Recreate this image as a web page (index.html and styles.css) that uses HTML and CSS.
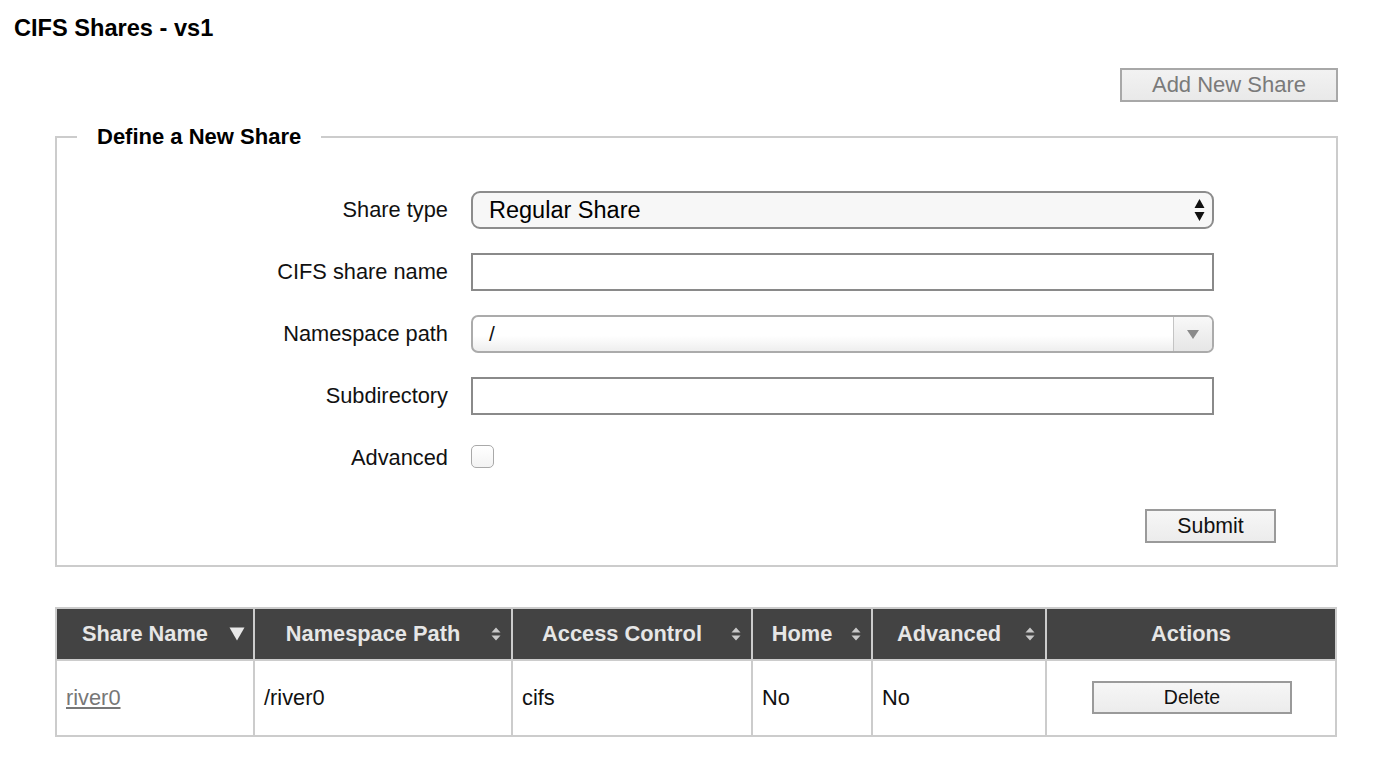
FILE: index.html
```html
<!DOCTYPE html>
<html>
<head>
<meta charset="utf-8">
<title>CIFS Shares - vs1</title>
<link rel="stylesheet" href="styles.css">
</head>
<body>
<div class="page">
  <h1 class="title">CIFS Shares - vs1</h1>
  <div class="toolbar">
    <button class="btn btn-add" type="button">Add New Share</button>
  </div>
  <fieldset class="share-form">
    <legend>Define a New Share</legend>
    <div class="rows">
      <div class="row">
        <label class="lbl">Share type</label>
        <div class="select">
          <span class="select-text">Regular Share</span>
          <svg class="select-arrows" width="11" height="24" viewBox="0 0 11 24"><path d="M5.5 1 L10.5 10 L0.5 10 Z M0.5 14 L10.5 14 L5.5 23 Z" fill="#111"/></svg>
        </div>
      </div>
      <div class="row">
        <label class="lbl">CIFS share name</label>
        <div class="text-input"></div>
      </div>
      <div class="row">
        <label class="lbl">Namespace path</label>
        <div class="combo">
          <span class="combo-text">/</span>
          <span class="combo-btn"><svg width="12" height="9" viewBox="0 0 12 9"><path d="M0 0 L12 0 L6 9 Z" fill="#8a8a8a"/></svg></span>
        </div>
      </div>
      <div class="row">
        <label class="lbl">Subdirectory</label>
        <div class="text-input"></div>
      </div>
      <div class="row">
        <label class="lbl">Advanced</label>
        <span class="checkbox"></span>
      </div>
    </div>
    <div class="submit-row">
      <button class="btn btn-submit" type="button">Submit</button>
    </div>
  </fieldset>

  <table class="grid">
    <colgroup>
      <col style="width:198px">
      <col style="width:258px">
      <col style="width:240px">
      <col style="width:120px">
      <col style="width:174px">
      <col style="width:290px">
    </colgroup>
    <thead>
      <tr>
        <th class="sortable">Share Name<svg class="sort-down" width="16" height="14" viewBox="0 0 16 14"><path d="M0.5 0.5 L15.5 0.5 L8 13.5 Z" fill="#e8e8e8"/></svg></th>
        <th class="sortable">Namespace Path<svg class="sort-both" width="10" height="14" viewBox="0 0 10 14"><path d="M5 0.5 L9.5 5.5 L0.5 5.5 Z M0.5 8.5 L9.5 8.5 L5 13.5 Z" fill="#c8c8c8"/></svg></th>
        <th class="sortable">Access Control<svg class="sort-both" width="10" height="14" viewBox="0 0 10 14"><path d="M5 0.5 L9.5 5.5 L0.5 5.5 Z M0.5 8.5 L9.5 8.5 L5 13.5 Z" fill="#c8c8c8"/></svg></th>
        <th class="sortable">Home<svg class="sort-both" width="10" height="14" viewBox="0 0 10 14"><path d="M5 0.5 L9.5 5.5 L0.5 5.5 Z M0.5 8.5 L9.5 8.5 L5 13.5 Z" fill="#c8c8c8"/></svg></th>
        <th class="sortable">Advanced<svg class="sort-both" width="10" height="14" viewBox="0 0 10 14"><path d="M5 0.5 L9.5 5.5 L0.5 5.5 Z M0.5 8.5 L9.5 8.5 L5 13.5 Z" fill="#c8c8c8"/></svg></th>
        <th>Actions</th>
      </tr>
    </thead>
    <tbody>
      <tr>
        <td><a class="link" href="#">river0</a></td>
        <td>/river0</td>
        <td>cifs</td>
        <td>No</td>
        <td>No</td>
        <td class="actions"><button class="btn btn-delete" type="button">Delete</button></td>
      </tr>
    </tbody>
  </table>
</div>
</body>
</html>
```

FILE: styles.css
```css
html, body {
  margin: 0;
  padding: 0;
  background: #ffffff;
}

body {
  font-family: "Liberation Sans", Arial, Helvetica, sans-serif;
  color: #111;
}

.page {
  padding: 14px 40px 0 0;
}

.title {
  margin: 0 0 0 14px;
  font-size: 23.6px;
  line-height: 28px;
  font-weight: bold;
  color: #000;
}

.toolbar {
  display: flex;
  justify-content: flex-end;
  margin: 26px 0 0 55px;
}

.btn {
  font-family: "Liberation Sans", Arial, Helvetica, sans-serif;
  background: linear-gradient(#f6f6f6, #ececec);
  border: 2px solid #9a9a9a;
  border-radius: 0;
  padding: 0;
  cursor: pointer;
  color: #111;
}

.btn-add {
  width: 218px;
  height: 34px;
  font-size: 22px;
  color: #7a7a7a;
  border-color: #a8a8a8;
  background: linear-gradient(#f2f2f2, #e9e9e9);
}

.share-form {
  margin: 22px 0 0 55px;
  padding: 0;
  border: 2px solid #cccccc;
  min-width: 0;
}

.share-form legend {
  margin-left: 20px;
  padding: 0 20px;
  font-size: 22px;
  line-height: 26px;
  font-weight: bold;
  color: #000;
}

.rows {
  display: flex;
  flex-direction: column;
  gap: 24px;
  padding-top: 41px;
}

.row {
  display: flex;
  align-items: center;
  gap: 23px;
  height: 38px;
}

.lbl {
  width: 391px;
  text-align: right;
  font-size: 21.8px;
  color: #111;
}

.select {
  box-sizing: border-box;
  width: 743px;
  height: 38px;
  border: 2px solid #8c8c8c;
  border-radius: 9px;
  background: #f7f7f7;
  display: flex;
  align-items: center;
  justify-content: space-between;
  padding: 0 7px 0 16px;
}

.select-text {
  font-size: 23.5px;
  color: #000;
}

.text-input {
  box-sizing: border-box;
  width: 743px;
  height: 38px;
  border: 2px solid #8a8a8a;
  background: #fff;
}

.combo {
  box-sizing: border-box;
  width: 743px;
  height: 38px;
  border: 2px solid #ababab;
  border-radius: 7px;
  background: linear-gradient(#ffffff 0%, #ffffff 55%, #eeeeee 100%);
  display: flex;
  align-items: center;
  overflow: hidden;
}

.combo-text {
  flex: 1;
  padding-left: 16px;
  font-size: 21px;
  color: #111;
}

.combo-btn {
  width: 38px;
  height: 100%;
  border-left: 1px solid #c4c4c4;
  display: flex;
  align-items: center;
  justify-content: center;
  background: linear-gradient(#f8f8f8, #e6e6e6);
}

.checkbox {
  box-sizing: border-box;
  width: 23px;
  height: 23px;
  margin-top: -3px;
  border: 1px solid #a9a9a9;
  border-radius: 5px;
  background: linear-gradient(#ffffff, #f3f3f3);
}

.submit-row {
  display: flex;
  justify-content: flex-end;
  padding: 32px 60px 22px 0;
}

.btn-submit {
  width: 131px;
  height: 34px;
  font-size: 21.3px;
}

.grid {
  margin: 40px 0 0 55px;
  width: 1280px;
  border-collapse: collapse;
  table-layout: fixed;
  border: 2px solid #cccccc;
}

.grid th {
  position: relative;
  background: #434343;
  color: #e6e6e6;
  font-size: 21.8px;
  font-weight: bold;
  height: 50px;
  padding: 0 30px 0 10px;
  text-align: center;
  border-left: 2px solid #cccccc;
  border-right: 2px solid #cccccc;
  white-space: nowrap;
}

.grid th:last-child {
  padding: 0 10px;
}

.grid th svg {
  position: absolute;
  top: 50%;
  transform: translateY(-50%);
}

.grid th .sort-down {
  right: 8px;
}

.grid th .sort-both {
  right: 10px;
}

.grid td {
  height: 74px;
  padding: 0 8px 0 9px;
  font-size: 21.8px;
  color: #111;
  border: 2px solid #cccccc;
  white-space: nowrap;
}

.link {
  color: #777;
  text-decoration: underline;
}

.grid td.actions {
  text-align: center;
  padding: 0 10px 0 12px;
}

.btn-delete {
  width: 200px;
  height: 33px;
  margin-top: -1px;
  font-size: 19.5px;
}
```
